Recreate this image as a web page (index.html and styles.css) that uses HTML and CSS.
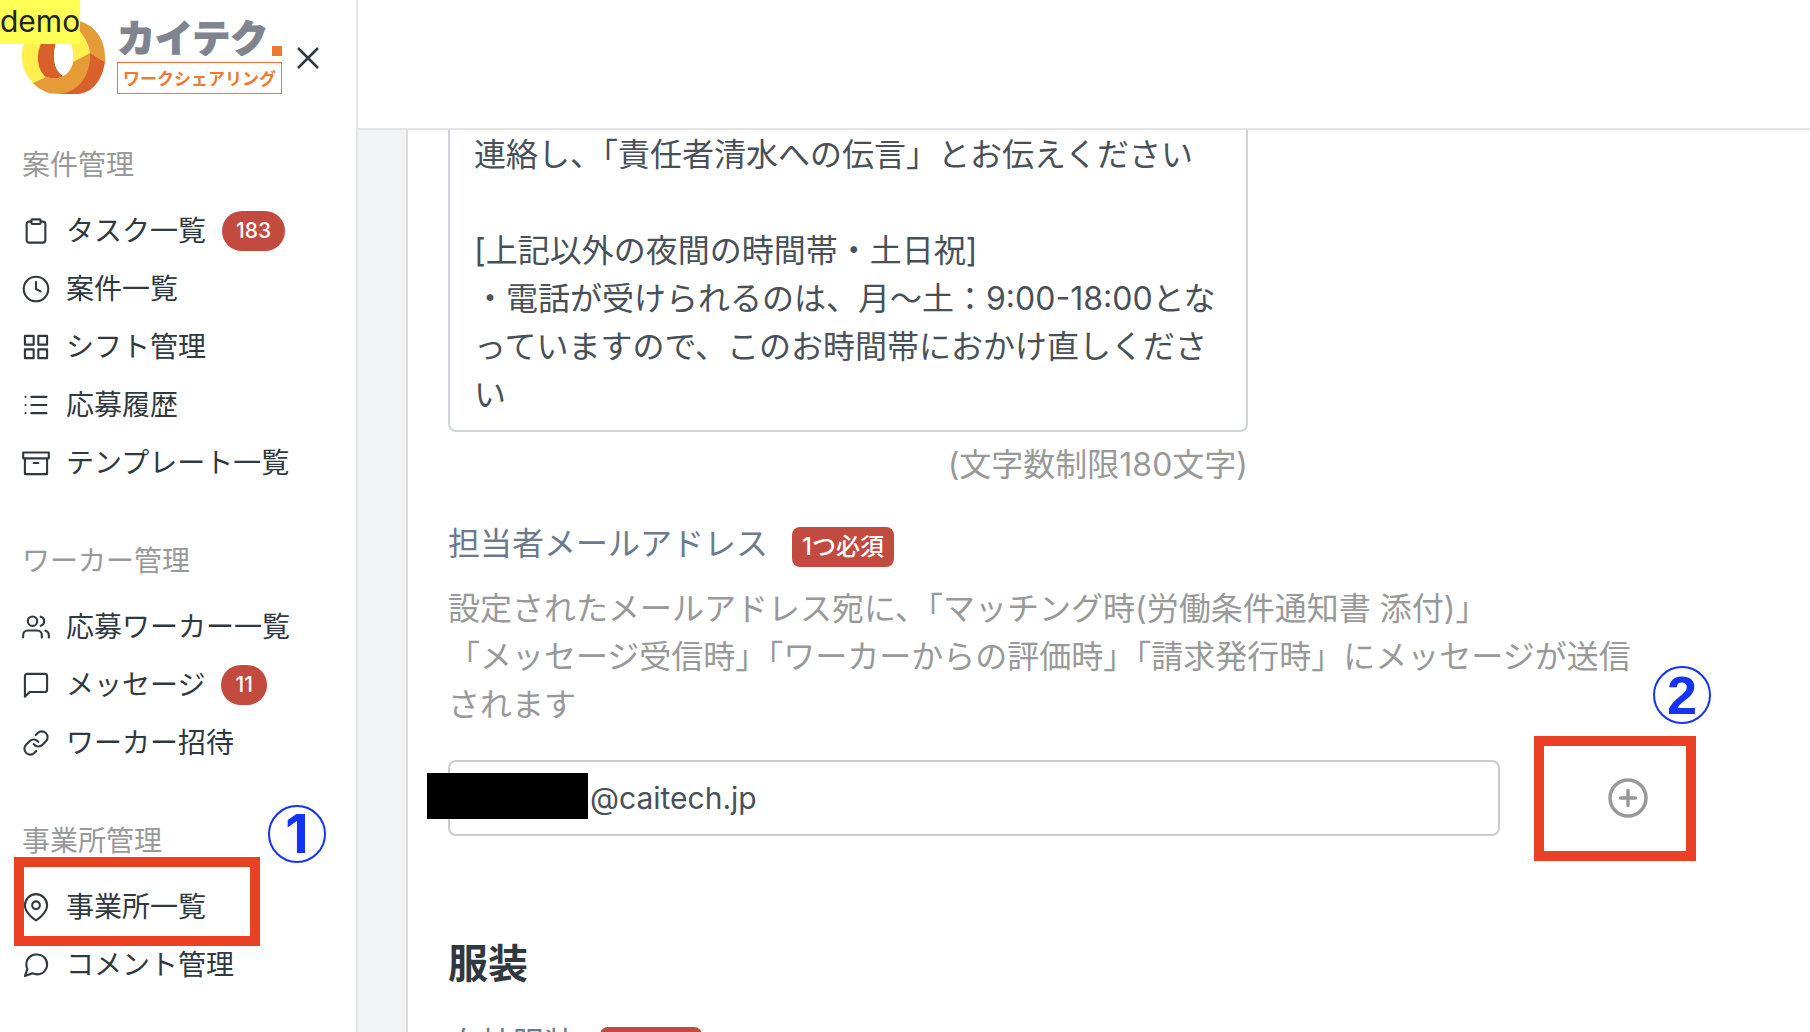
FILE: index.html
```html
<!DOCTYPE html>
<html lang="ja">
<head>
    <meta charset="UTF-8">
    <title>カイテク ワークシェアリング</title>
    <link rel="stylesheet" href="styles.css">
</head>
<body>
    <div class="layout">
        <aside class="sidebar">
            <div class="brand">
                <svg class="brand-mark" viewBox="0 0 84 74" aria-hidden="true">
                    <path fill="#fff04d" d="M42 0C14 0 0 17 0 36C0 47 4 56 11 63L24 57L41 30L51 42L68 33L58 1Z"/>
                    <path fill="#e59b36" d="M44 0H50C70 1 83 17 83 37V42L68 33C66 20 58 8 44 0Z"/>
                    <path fill="#d95f2b" d="M68 33L83 42C80 61 70 73 56 74H36C56 66 68 54 68 33Z"/>
                    <path fill="#e59b36" d="M11 63L24 57C30 59 37 59 41 56C47 53 50 48 51 42L68 33C69 56 56 72 38 74C27 74 18 71 11 63Z"/>
                    <path fill="#d95f2b" d="M26 14C13 26 13 48 24 57C30 59 37 59 41 56C35 52 32 45 32 36C32 28 35 21 40 14Z"/>
                    <path fill="#fff" d="M41 16C48 16 51 26 51 36C51 46 47 53 41 56C35 52 32 45 32 36C32 26 35 16 41 16Z"/>
                </svg>
                <div class="brand-text">
                    <div class="brand-name">カイテク<span class="brand-dot"></span></div>
                    <div class="brand-sub">ワークシェアリング</div>
                </div>
                <button class="close" type="button" aria-label="閉じる">
                    <svg viewBox="0 0 22 22"><path d="M1 1l20 20M21 1L1 21"/></svg>
                </button>
            </div>

            <nav>
                <h2 class="nav-title">案件管理</h2>
                <ul class="nav-list">
                    <li><a href="#">
                        <svg class="icon" viewBox="0 0 24 24"><path d="M16 4h2a2 2 0 0 1 2 2v14a2 2 0 0 1-2 2H6a2 2 0 0 1-2-2V6a2 2 0 0 1 2-2h2"/><rect x="8" y="2" width="8" height="4" rx="1"/></svg>
                        タスク一覧<span class="count">183</span></a></li>
                    <li><a href="#">
                        <svg class="icon" viewBox="0 0 24 24"><circle cx="12" cy="12" r="10.500"/><path d="M12 6v6l4 2"/></svg>
                        案件一覧</a></li>
                    <li><a href="#">
                        <svg class="icon" viewBox="0 0 24 24"><path d="M2.500 2.500h7.500v7.500H2.500zM14 2.500h7.500v7.500H14zM14 14h7.500v7.500H14zM2.500 14h7.500v7.500H2.500z"/></svg>
                        シフト管理</a></li>
                    <li><a href="#">
                        <svg class="icon" viewBox="0 0 24 24"><path d="M8 5h13M8 12h13M8 19h13M3 5h.01M3 12h.01M3 19h.01"/></svg>
                        応募履歴</a></li>
                    <li><a href="#">
                        <svg class="icon" viewBox="0 0 24 24"><path d="M21.500 8v13.500H2.500V8M1 3h22v5H1zM10 12h4"/></svg>
                        テンプレート一覧</a></li>
                </ul>

                <h2 class="nav-title">ワーカー管理</h2>
                <ul class="nav-list">
                    <li><a href="#">
                        <svg class="icon" viewBox="0 0 24 24"><path d="M17 21v-2a4 4 0 0 0-4-4H5a4 4 0 0 0-4 4v2"/><circle cx="9" cy="7" r="4"/><path d="M23 21v-2a4 4 0 0 0-3-3.870M16 3.130a4 4 0 0 1 0 7.750"/></svg>
                        応募ワーカー一覧</a></li>
                    <li><a href="#">
                        <svg class="icon" viewBox="0 0 24 24"><path d="M21.500 16a2 2 0 0 1-2 2H6.500l-4 4V4.500a2 2 0 0 1 2-2h15a2 2 0 0 1 2 2z"/></svg>
                        メッセージ<span class="count">11</span></a></li>
                    <li><a href="#">
                        <svg class="icon" viewBox="0 0 24 24"><path d="M10 13a5 5 0 0 0 7.540.540l3-3a5 5 0 0 0-7.070-7.070l-1.720 1.710"/><path d="M14 11a5 5 0 0 0-7.540-.540l-3 3a5 5 0 0 0 7.070 7.070l1.710-1.710"/></svg>
                        ワーカー招待</a></li>
                </ul>

                <h2 class="nav-title">事業所管理</h2>
                <ul class="nav-list">
                    <li><a href="#">
                        <svg class="icon" viewBox="0 0 24 24"><path d="M21.500 10.500c0 7-9.500 13-9.500 13s-9.500-6-9.500-13a9.500 9.500 0 0 1 19 0z"/><circle cx="12" cy="10.500" r="3.300"/></svg>
                        事業所一覧</a></li>
                    <li><a href="#">
                        <svg class="icon" viewBox="0 0 24 24"><path d="M21.500 11.500a8.500 8.500 0 0 1-.9 3.800 8.500 8.500 0 0 1-7.600 4.700 8.500 8.500 0 0 1-3.800-.9L2.500 21.500l2.100-6.200a8.500 8.500 0 0 1-.9-3.800 8.500 8.500 0 0 1 4.700-7.600 8.500 8.500 0 0 1 3.800-.9h.5a8.500 8.500 0 0 1 8.800 8z"/></svg>
                        コメント管理</a></li>
                </ul>
            </nav>
        </aside>

        <div class="page">
            <header class="topbar"></header>
            <main class="content">
                <form class="card">
                    <textarea class="memo" rows="6" aria-label="連絡事項">連絡し、「責任者清水への伝言」とお伝えください

[上記以外の夜間の時間帯・土日祝]
・電話が受けられるのは、月〜土：9:00-18:00となっていますので、このお時間帯におかけ直しください</textarea>
                    <p class="limit">(文字数制限180文字)</p>

                    <div class="label-row">
                        <label for="email">担当者メールアドレス</label>
                        <span class="required">1つ必須</span>
                    </div>
                    <p class="help-text">設定されたメールアドレス宛に、「マッチング時(労働条件通知書 添付)」<br>「メッセージ受信時」「ワーカーからの評価時」「請求発行時」にメッセージが送信されます</p>
                    <div class="email-row">
                        <div class="email-field">
                            <input type="text" id="email" value="@caitech.jp">
                            <span class="mask"></span>
                        </div>
                        <button class="add" type="button" aria-label="追加">
                            <svg viewBox="0 0 40 40"><circle cx="20" cy="20" r="18"/><path d="M20 12.500v15M12.500 20h15"/></svg>
                            <span class="highlight highlight-add"></span>
                            <span class="step step-add">2</span>
                        </button>
                    </div>

                    <h2 class="section-title">服装</h2>
                    <div class="label-row">
                        <span>自社服装</span>
                        <span class="required">1つ必須</span>
                    </div>
                </form>
            </main>
        </div>
    </div>

    <div class="demo">demo</div>
    <span class="highlight highlight-office"></span>
    <span class="step step-office">1</span>
</body>
</html>
```
FILE: styles.css
```css
* { box-sizing: border-box; }
body { margin: 0; font-family: Inter, "Noto Sans CJK JP", sans-serif; font-size: 32px; line-height: 48px; color: #303841; background: #fff; }
h2, p, ul { margin: 0; padding: 0; }

.layout { display: grid; grid-template-columns: 358px 1fr; height: 100vh; overflow: hidden; }

/* sidebar */
.sidebar { border-right: 2px solid #e2e4e6; padding: 20px 22px 0; overflow: hidden; }
.brand { display: flex; height: 76px; }
.brand-mark { width: 84px; height: 74px; flex: none; }
.brand-text { width: 165px; margin-left: 11px; flex: none; }
.brand-name { display: flex; align-items: flex-end; justify-content: space-between; height: 36px; font-size: 38px; font-weight: 900; line-height: 36px; color: #80848e; white-space: nowrap; -webkit-text-stroke: 1px #80848e; }
.brand-dot { width: 10px; height: 10px; flex: none; background: #ed7a30; }
.brand-sub { margin-top: 6px; height: 32px; border: 1px solid #ed7a30; font-size: 17px; font-weight: 700; line-height: 32px; text-align: center; color: #ed7a30; white-space: nowrap; }
.close { width: 22px; height: 76px; margin-left: 15px; padding: 0; border: none; background: none; cursor: pointer; flex: none; }
.close svg { display: block; width: 22px; fill: none; stroke: #303841; stroke-width: 2.500; }

.nav-title { font-size: 28px; font-weight: 400; line-height: 42px; color: #999; margin-top: 48px; }
.nav-list { list-style: none; margin-top: 16px; }
.nav-list a { display: flex; align-items: center; height: 58px; font-size: 28px; color: #303841; text-decoration: none; white-space: nowrap; }
.icon { width: 28px; height: 28px; margin-right: 16px; flex: none; fill: none; stroke: currentColor; stroke-width: 1.800; stroke-linecap: round; stroke-linejoin: round; overflow: visible; }
.count { margin-left: 16px; padding: 0 14px; height: 40px; border-radius: 20px; background: #c34a3f; color: #fff; font-size: 21px; font-weight: 500; line-height: 40px; }

/* main */
.page { display: flex; flex-direction: column; min-width: 0; height: 100vh; }
.topbar { height: 130px; flex: none; border-bottom: 2px solid #e2e4e6; }
.content { flex: 1; min-height: 0; overflow: hidden; padding-left: 48px; background: #f2f3f5; }
.card { padding: 0 40px; min-height: 100%; border-left: 2px solid #dcdcdc; background: #fff; }
.memo { display: block; width: 800px; max-width: 100%; padding: 1px 24px 11px; border: 2px solid #ced4da; border-top: none; border-radius: 0 0 8px 8px; font: inherit; color: #495057; background: #fff; resize: none; overflow: hidden; outline: none; }
.limit { width: 800px; max-width: 100%; margin-top: 9px; text-align: right; color: #999; }
.label-row { display: flex; align-items: center; gap: 24px; margin-top: 31px; color: #6c7a8c; }
.required { height: 40px; margin-top: 6px; padding: 0 10px; border-radius: 8px; background: #c34a3f; color: #fff; font-size: 24px; font-weight: 500; line-height: 40px; }
.help-text { max-width: 1200px; margin-top: 17px; color: #999; }
.email-row { display: flex; align-items: center; max-width: 1200px; margin-top: 31px; }
.email-field { position: relative; flex: 1; }
.email-field input { display: block; width: 100%; height: 76px; padding: 0 24px 0 140px; border: 2px solid #ccc; border-radius: 8px; font: inherit; font-size: 30px; color: #495057; background: #fff; outline: none; }
.mask { position: absolute; left: -21px; top: 13px; width: 161px; height: 46px; background: #000; }
.add { position: relative; width: 40px; height: 40px; margin-left: 108px; padding: 0; border: none; background: none; cursor: pointer; }
.add svg { display: block; width: 40px; height: 40px; fill: none; stroke: #999; stroke-width: 3.500; stroke-linecap: round; }
.section-title { margin-top: 98px; font-size: 40px; font-weight: 600; line-height: 60px; }
.section-title + .label-row { margin-top: 26px; }

/* overlays */
.demo { position: absolute; left: 0; top: 0; width: 80px; height: 44px; background: #ffff54; color: #212529; font-size: 30px; line-height: 42px; }
.highlight { position: absolute; border: 10px solid #ea4025; pointer-events: none; }
.highlight-office { left: 14px; top: 857px; width: 246px; height: 89px; }
.highlight-add { left: -74px; top: -42px; width: 162px; height: 125px; }
.step { position: absolute; width: 58px; height: 58px; border: 2px solid #1433f5; border-radius: 50%; color: #1433f5; font-size: 54px; font-weight: 700; line-height: 54px; text-align: center; pointer-events: none; }
.step-office { left: 268px; top: 805px; }
.step-add { left: 45px; top: -112px; font-family: "Liberation Sans", Arial, sans-serif; }
```
